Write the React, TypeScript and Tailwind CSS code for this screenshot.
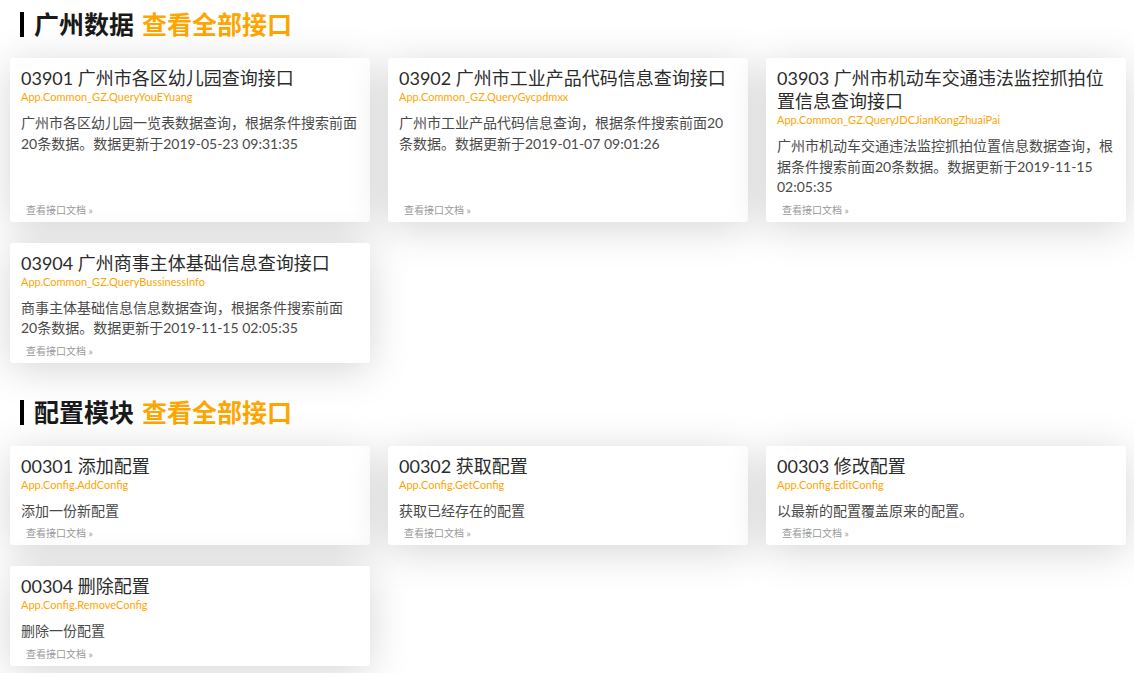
import React from "react";

interface Api {
  code: string;
  title: string;
  service: string;
  desc: string;
}

interface Section {
  name: string;
  apis: Api[];
}

const sections: Section[] = [
  {
    name: "广州数据",
    apis: [
      {
        code: "03901",
        title: "广州市各区幼儿园查询接口",
        service: "App.Common_GZ.QueryYouEYuang",
        desc: "广州市各区幼儿园一览表数据查询，根据条件搜索前面20条数据。数据更新于2019-05-23 09:31:35",
      },
      {
        code: "03902",
        title: "广州市工业产品代码信息查询接口",
        service: "App.Common_GZ.QueryGycpdmxx",
        desc: "广州市工业产品代码信息查询，根据条件搜索前面20条数据。数据更新于2019-01-07 09:01:26",
      },
      {
        code: "03903",
        title: "广州市机动车交通违法监控抓拍位置信息查询接口",
        service: "App.Common_GZ.QueryJDCJianKongZhuaiPai",
        desc: "广州市机动车交通违法监控抓拍位置信息数据查询，根据条件搜索前面20条数据。数据更新于2019-11-15 02:05:35",
      },
      {
        code: "03904",
        title: "广州商事主体基础信息查询接口",
        service: "App.Common_GZ.QueryBussinessInfo",
        desc: "商事主体基础信息信息数据查询，根据条件搜索前面20条数据。数据更新于2019-11-15 02:05:35",
      },
    ],
  },
  {
    name: "配置模块",
    apis: [
      {
        code: "00301",
        title: "添加配置",
        service: "App.Config.AddConfig",
        desc: "添加一份新配置",
      },
      {
        code: "00302",
        title: "获取配置",
        service: "App.Config.GetConfig",
        desc: "获取已经存在的配置",
      },
      {
        code: "00303",
        title: "修改配置",
        service: "App.Config.EditConfig",
        desc: "以最新的配置覆盖原来的配置。",
      },
      {
        code: "00304",
        title: "删除配置",
        service: "App.Config.RemoveConfig",
        desc: "删除一份配置",
      },
    ],
  },
];

function ApiCard({ api }: { api: Api }) {
  return (
    <div className="flex flex-col bg-white rounded-[3px] pt-[9px] pb-[6px] pl-[11px] pr-[12px] shadow-[0_6px_40px_rgba(0,0,0,0.17)]">
      {/* Title */}
      <h3 className="text-[18px] leading-[23px] text-[#2b2b2b] font-normal">
        {api.code} {api.title}
      </h3>
      <div className="text-[11px] leading-[13px] text-[#ffa500]">{api.service}</div>

      {/* Description */}
      <p className="mt-[10px] text-[14px] leading-[20.5px] text-[#4a4a4a]">{api.desc}</p>

      {/* Docs link */}
      <a href="#" className="mt-auto pt-[6px] ml-[5px] text-[10px] leading-[12px] text-[#999]">
        查看接口文档 »
      </a>
    </div>
  );
}

export default function App() {
  return (
    <div
      className="min-h-screen bg-white pt-[12px] pb-[30px] pl-[10px] pr-[8px]"
      style={{ fontFamily: 'Lato, "Noto Sans CJK SC", sans-serif' }}
    >
      {sections.map((section, i) => (
        <section key={section.name} className={i > 0 ? "mt-[37px]" : ""}>
          {/* Section heading */}
          <h2 className="ml-[10px] mb-[21px] border-l-4 border-black pl-[10px] text-[25px] leading-[25px] font-bold text-[#1a1a1a]">
            {section.name}
            <a href="#" className="ml-[8px] text-[#ffa500]">
              查看全部接口
            </a>
          </h2>

          <div className="grid grid-cols-3 gap-x-[18px] gap-y-[21px]">
            {section.apis.map((api) => (
              <ApiCard key={api.code} api={api} />
            ))}
          </div>
        </section>
      ))}
    </div>
  );
}
